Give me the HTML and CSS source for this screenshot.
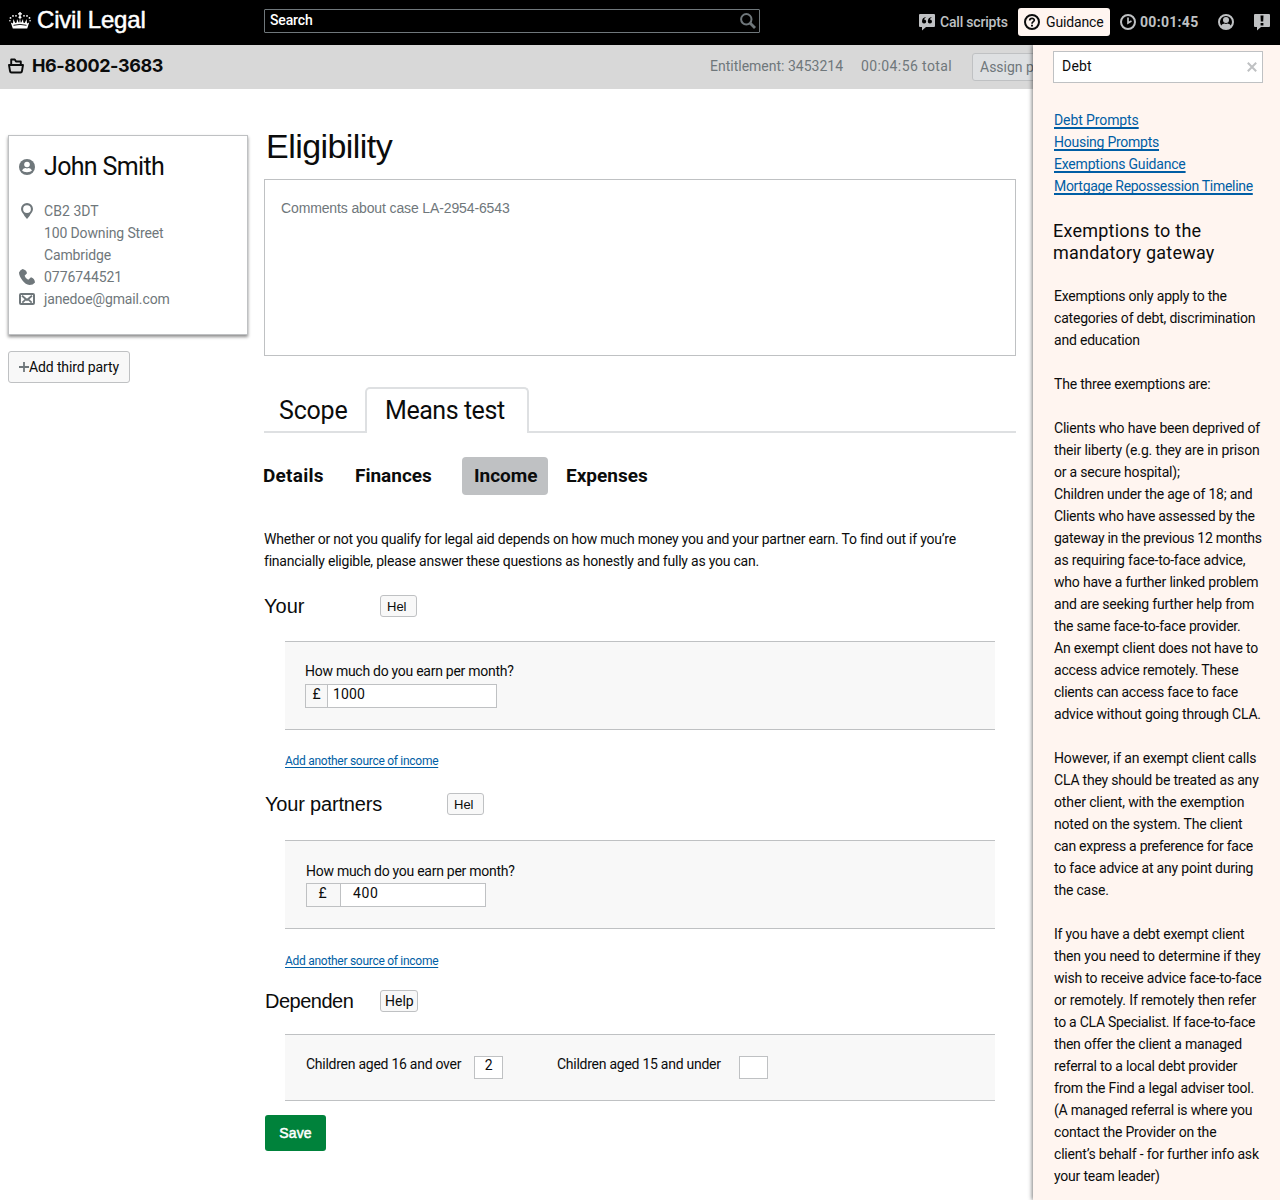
FILE: index.html
```html
<!DOCTYPE html>
<html lang="en">
<head>
<meta charset="utf-8">
<title>Civil Legal</title>
<link rel="stylesheet" href="styles.css">
</head>
<body>
<header class="topbar">
  <svg class="crown" width="22" height="17" viewBox="0 0 22 17" fill="#fff"><path d="M10.300 0h1.400v1.300H13v1.300h-1.300V4h-1.400V2.600H9V1.300h1.300z"/><circle cx="11" cy="5.300" r="1.400"/><circle cx="7" cy="3.800" r=".9"/><circle cx="15" cy="3.800" r=".9"/><circle cx="4" cy="3.900" r=".9"/><circle cx="18" cy="3.900" r=".9"/><circle cx="1.500" cy="5.900" r=".9"/><circle cx="20.500" cy="5.900" r=".9"/><circle cx=".9" cy="8.700" r=".8"/><circle cx="21.100" cy="8.700" r=".8"/><path d="M1.800 10.500l2.200 1 .4-4.500 1.800 4 1.500-.5.300-3.500 1.700 3.500h.6L11 6l.7 4.500h.6L14 7l.3 3.500 1.500.5 1.800-4 .4 4.500 2.200-1-2 6H3.800z"/><path d="M4.500 13.300q6.500-1.800 13 0" fill="none" stroke="#000" stroke-width=".9"/></svg>
  <span class="brand">Civil Legal</span>
  <div class="search"><span>Search</span>
    <svg width="16" height="16" viewBox="0 0 16 16" fill="none" stroke="#6f777b"><circle cx="6.300" cy="6.300" r="5.200" stroke-width="2"/><path d="M10 10l5 5" stroke-width="2.800"/></svg>
  </div>
  <nav class="tools">
    <a class="tool scripts"><svg width="16" height="17" viewBox="0 0 16 17"><path fill="#bfc1c3" d="M1 0h14q1 0 1 1v11q0 1-1 1H7l-4 3.500V13H1q-1 0-1-1V1q0-1 1-1z"/><path fill="#000" d="M7.200 3Q3 3.400 3 7.500a2.100 2.100 0 1 0 2-2.100Q5.400 4.200 7.200 3zM13 3Q8.800 3.400 8.800 7.500a2.100 2.100 0 1 0 2-2.100Q11.200 4.200 13 3z"/></svg><span>Call scripts</span></a>
    <a class="tool guide"><svg width="16" height="16" viewBox="0 0 16 16" fill="none" stroke="#0b0c0c"><circle cx="8" cy="8" r="7" stroke-width="2"/><path d="M5.700 6.500c0-3 4.700-2.800 4.600-.2C10.200 7.800 8 7.600 8 9.700" stroke-width="1.700"/><path d="M8 10.700v1.900" stroke-width="2"/></svg><span>Guidance</span></a>
    <a class="tool timer"><svg width="16" height="16" viewBox="0 0 16 16" fill="none" stroke="#bfc1c3"><circle cx="8" cy="8" r="7" stroke-width="2"/><path d="M8 3.500V9l3.500-2" stroke-width="1.700"/></svg><span>00:01:45</span></a>
    <a class="tool user"><svg width="16" height="16" viewBox="0 0 16 16"><circle cx="8" cy="8" r="7" fill="none" stroke="#bfc1c3" stroke-width="2"/><circle cx="8" cy="6" r="3" fill="#bfc1c3"/><path d="M2.500 12.500Q4 9.700 6.500 9.500q1.500.8 3 0 2.500.2 4 3Q11 15 8 15t-5.500-2.500z" fill="#bfc1c3"/></svg></a>
    <a class="tool alert"><svg width="16" height="17" viewBox="0 0 16 17"><path fill="#bfc1c3" d="M1 0h14q1 0 1 1v11q0 1-1 1H7l-4 3.500V13H1q-1 0-1-1V1q0-1 1-1z"/><path fill="#000" d="M6.500 1.500h3L9.200 7.500H6.800zM6.600 9h2.800v2.600H6.600z"/></svg></a>
  </nav>
</header>
<div class="page">
  <div class="workspace">
    <div class="casebar">
      <svg width="16" height="16" viewBox="0 0 16 16" fill="none" stroke="#0b0c0c" stroke-width="1.900" stroke-linejoin="round"><path d="M1 7h14l-1 6q-.2 1.500-1.500 1.500h-9Q2.200 14.500 2 13zM3.200 7V1.500h3.600l1.200 2h4.800V7"/></svg>
      <h2 class="ref">H6-8002-3683</h2>
      <span class="ent">Entitlement: 3453214</span><span class="total">00:04:56 total</span>
      <button class="assign">Assign provider</button>
    </div>
    <div class="columns">
      <aside class="client">
        <div class="card">
          <div class="name"><svg width="16" height="16" viewBox="0 0 16 16"><circle cx="8" cy="8" r="8" fill="#6f777b"/><circle cx="8" cy="5.500" r="2.800" fill="#fff"/><path d="M3 11.500Q4 9 6.200 9q1.800.9 3.600 0 2.200 0 3.200 2.500-1.500 1.800-5 1.800t-5-1.800z" fill="#fff"/></svg><span>John Smith</span></div>
          <div class="row postcode"><svg width="16" height="16" viewBox="0 0 16 16"><path fill="#6f777b" fill-rule="evenodd" d="M8 0a6 6 0 0 1 6 6c0 2.800-2.500 4.600-3.500 7L8 16l-2.500-3C4.500 10.600 2 8.800 2 6a6 6 0 0 1 6-6zm0 2.200a3.900 3.900 0 1 0 0 7.800 3.900 3.900 0 0 0 0-7.800z"/></svg><span>CB2 3DT</span></div>
          <div class="row"><i></i><span>100 Downing Street</span></div>
          <div class="row"><i></i><span>Cambridge</span></div>
          <div class="row phone"><svg width="16" height="16" viewBox="0 0 16 16"><path fill="#6f777b" d="M3.700 0Q7.500 1 8 4.200L5.600 6.700q.9 2.800 3.600 4.100L12 8.200q3.500 1 4 5.300-2 2.500-5.500 2.500-4-.5-7-4.500Q0 7 0 3.500 1.200.6 3.700 0z"/></svg><span>0776744521</span></div>
          <div class="row"><svg width="16" height="12" viewBox="0 0 16 12" fill="none" stroke="#6f777b"><rect x="1" y="1" width="14" height="10" rx="1" stroke-width="2"/><path d="M3 2.800L8 7l5-4.200M3.300 9.700l3.200-3M12.700 9.700l-3.200-3" stroke-width="1.800"/></svg><span>janedoe@gmail.com</span></div>
        </div>
        <button class="add"><svg width="10" height="10" viewBox="0 0 10 10"><path d="M5 0v10M0 5h10" stroke="#6f777b" stroke-width="1.800"/></svg><span>Add third party</span></button>
      </aside>
      <main class="main">
        <h1>Eligibility</h1>
        <div class="comments">Comments about case LA-2954-6543</div>
        <div class="tabs"><div class="tab scope">Scope</div><div class="tab active">Means test</div><div class="rest"></div></div>
        <nav class="steps"><a class="s1">Details</a><a class="s2">Finances</a><a class="s3">Income</a><a class="s4">Expenses</a></nav>
        <p class="intro">Whether or not you qualify for legal aid depends on how much money you and your partner earn. To find out if you’re<br>financially eligible, please answer these questions as honestly and fully as you can.</p>
        <div class="sect your"><h3>Your</h3><button class="help">Hel</button></div>
        <div class="panel"><label class="q">How much do you earn per month?</label><div class="money"><b>£</b><span>1000</span></div></div>
        <a class="more">Add another source of income</a>
        <div class="sect partner"><h3>Your partners</h3><button class="help">Hel</button></div>
        <div class="panel second"><label class="q">How much do you earn per month?</label><div class="money wide"><b>£</b><span>400</span></div></div>
        <a class="more">Add another source of income</a>
        <div class="sect deps"><h3>Dependen</h3><button class="help full">Help</button></div>
        <div class="panel kids"><label class="k1">Children aged 16 and over</label><div class="num">2</div><label class="k2">Children aged 15 and under</label><div class="num"></div></div>
        <button class="save">Save</button>
      </main>
    </div>
  </div>
  <aside class="guidance">
    <div class="filter"><span>Debt</span><svg width="10" height="10" viewBox="0 0 10 10"><path d="M.8.800l8.400 8.400M9.200.800L.8 9.200" stroke="#bfc1c3" stroke-width="2"/></svg></div>
    <ul class="links"><li class="g1"><a>Debt Prompts</a></li><li class="g2"><a>Housing Prompts</a></li><li class="g3"><a>Exemptions Guidance</a></li><li class="g4"><a>Mortgage Repossession Timeline</a></li></ul>
    <h4>Exemptions to the<br>mandatory gateway</h4>
    <p>Exemptions only apply to the<br>categories of debt, discrimination<br>and education</p>
    <p>The three exemptions are:</p>
    <p>Clients who have been deprived of<br><span class="loose">their liberty (e.g. they are in prison</span><br>or a secure hospital);<br>Children under the age of 18; and<br><span class="tight">Clients who have assessed by the</span><br><span class="tight">gateway in the previous 12 months</span><br>as requiring face-to-face advice,<br>who have a further linked problem<br>and are seeking further help from<br>the same face-to-face provider.<br>An exempt client does not have to<br>access advice remotely. These<br><span class="tight">clients can access face to face</span><br>advice without going through CLA.</p>
    <p><span class="loose">However, if an exempt client calls</span><br>CLA they should be treated as any<br><span class="loose">other client, with the exemption</span><br>noted on the system. The client<br><span class="tight">can express a preference for face</span><br>to face advice at any point during<br>the case.</p>
    <p>If you have a debt exempt client<br><span class="loose">then you need to determine if they</span><br>wish to receive advice face-to-face<br><span class="loose">or remotely. If remotely then refer</span><br><span class="tight">to a CLA Specialist. If face-to-face</span><br>then offer the client a managed<br>referral to a local debt provider<br>from the Find a legal adviser tool.<br>(A managed referral is where you<br>contact the Provider on the<br>client’s behalf - for further info ask<br>your team leader)</p>
  </aside>
</div>
</body>
</html>
```
FILE: styles.css
```css
* { box-sizing: border-box; }
body { margin: 0; width: 1280px; height: 1200px; overflow: hidden; background: #fff; color: #0b0c0c; font: 14px/22px Roboto, sans-serif; }
h1, h2, h3, h4, p, ul { margin: 0; padding: 0; font-weight: 400; }
li { list-style: none; }
svg { display: block; flex: none; }
button { font: inherit; color: inherit; padding: 0; white-space: nowrap; letter-spacing: inherit; }
.topbar { height: 45px; background: #000; display: flex; align-items: flex-start; padding-left: 9px; }
.crown { margin-top: 12px; }
.brand { width: 233px; margin-left: 6px; margin-top: 5px; font: 24px/30px "Liberation Sans", sans-serif; letter-spacing: -.2px; color: #fff; -webkit-text-stroke: .5px #fff; }
.search { width: 496px; height: 24px; margin: 9px 0 0 -6px; border: 1px solid #6f777b; border-radius: 1px; display: flex; justify-content: space-between; padding: 0 3px 0 5px; color: #fff; font-weight: 500; letter-spacing: -.15px; line-height: 21px; }
.search svg { margin-top: 3px; }
.tools { display: flex; align-items: flex-start; margin-left: 159px; padding-top: 8px; color: #bfc1c3; font-weight: 500; }
.tool { display: flex; height: 28px; line-height: 28px; align-items: flex-start; }
.tool svg { margin-top: 6px; }
.scripts span { margin-left: 5px; width: 78px; white-space: nowrap; letter-spacing: -.2px; }
.guide { background: #fff5f0; color: #0b0c0c; border-radius: 3px; width: 92px; padding-left: 6px; font-weight: 400; letter-spacing: -.15px; }
.guide span { margin-left: 6px; }
.timer { margin-left: 10px; width: 98px; font-weight: 700; letter-spacing: .3px; }
.timer span { margin-left: 4px; }
.user { width: 36px; }
.page { display: grid; grid-template-columns: 1033px 247px; height: 1155px; }
.workspace { min-width: 0; overflow: hidden; }
.casebar { height: 44px; background: #d8d8d8; display: flex; padding-left: 8px; color: #6f777b; line-height: 42px; white-space: nowrap; }
.casebar svg { margin-top: 13px; }
.ref { flex: none; width: 686px; padding-left: 8px; font: 700 18px/41px Inter, sans-serif; letter-spacing: -.4px; color: #0b0c0c; }
.ent { flex: none; width: 151px; }
.total { flex: none; width: 111px; letter-spacing: .4px; }
.assign { flex: none; width: 120px; height: 28px; margin-top: 8px; border: 1px solid #bfc1c3; border-radius: 3px; background: #dee0e2; text-align: left; padding-left: 7px; line-height: 26px; }
.columns { display: grid; grid-template-columns: 240px 752px; gap: 16px; padding-left: 8px; }
.client { padding-top: 46px; letter-spacing: -.13px; }
.card { height: 200px; border: 1px solid #bfc1c3; box-shadow: 0 2px 3px rgba(0,0,0,.45); padding: 15px 0 0 10px; }
.name { display: flex; align-items: center; font-size: 25px; line-height: 32px; margin-bottom: 17px; gap: 9px; letter-spacing: -.65px; }
.row { display: flex; align-items: center; gap: 9px; height: 22px; color: #6f777b; }
.row i { width: 16px; }
.postcode { letter-spacing: .05px; }
.phone { letter-spacing: -.05px; }
.add { display: flex; align-items: center; width: 122px; height: 32px; margin-top: 16px; padding-left: 10px; border: 1px solid #bfc1c3; border-radius: 3px; background: #f8f8f8; }
.main { padding-top: 37px; }
h1 { font: 34px/40px "Liberation Sans", sans-serif; height: 53px; padding-left: 2px; letter-spacing: -.55px; }
.comments { height: 177px; border: 1px solid #bfc1c3; padding: 17px 16px; color: #6f777b; font-family: "Liberation Sans", sans-serif; letter-spacing: -.13px; }
.tabs { display: flex; height: 46px; margin-top: 31px; font-size: 25px; line-height: 44px; }
.tab { height: 46px; }
.scope { width: 101px; padding: 1px 0 0 15px; border-bottom: 2px solid #dee0e2; letter-spacing: -.2px; line-height: 46px; }
.active { width: 164px; padding-left: 18px; border: 2px solid #dee0e2; border-bottom: 0; border-radius: 5px 5px 0 0; letter-spacing: -.45px; }
.rest { flex: 1; border-bottom: 2px solid #dee0e2; }
.steps { display: flex; height: 38px; margin-top: 24px; font-size: 19px; font-weight: 700; line-height: 37px; margin-left: -1px; }
.s1 { width: 92px; letter-spacing: .25px; }
.s2 { width: 107px; }
.s3 { width: 86px; background: #bfc1c3; border-radius: 4px; padding-left: 12px; }
.s4 { padding-left: 18px; }
.intro { margin-top: 33px; white-space: nowrap; letter-spacing: -.222px; }
.sect { display: flex; height: 22px; }
.sect h3 { width: 116px; font: 20px/22px "Liberation Sans", sans-serif; white-space: nowrap; }
.your { margin-top: 23px; }
.help { width: 37px; height: 22px; border: 1px solid #bfc1c3; border-radius: 3px; background: #f8f8f8; font: 13px/21px "Liberation Sans", sans-serif; text-align: left; padding-left: 6px; }
.full { width: 38px; padding-left: 4px; font: 14px/20px Roboto, sans-serif; }
.partner { margin-top: 21px; padding-left: 1px; }
.partner h3 { width: 182px; letter-spacing: -.18px; }
.deps { margin-top: 18px; padding-left: 1px; }
.deps h3 { width: 115px; letter-spacing: -.5px; }
.panel { height: 89px; width: 710px; margin: 24px 0 20px 21px; padding: 18px 20px 0; border: 1px solid #bfc1c3; border-width: 1px 0; background: #f8f8f8; }
.q { display: block; line-height: 22px; letter-spacing: -.27px; }
.money { display: flex; width: 192px; height: 24px; margin-top: 2px; border: 1px solid #bfc1c3; line-height: 18px; }
.money b { width: 22px; font-weight: 400; text-align: center; border-right: 1px solid #bfc1c3; }
.money span { flex: 1; background: #fff; padding-left: 5px; letter-spacing: .15px; }
.second { margin: 25px 0 21px 21px; padding-top: 19px; padding-left: 21px; }
.money.wide { width: 180px; margin-top: 1px; }
.wide b { width: 34px; padding-right: 2px; }
.money.wide span { padding-left: 12px; letter-spacing: .6px; }
.more { display: block; width: 154px; margin-left: 21px; font-size: 12px; line-height: 22px; color: #005ea5; text-decoration: underline; text-decoration-skip-ink: none; white-space: nowrap; text-underline-offset: 2px; letter-spacing: -.28px; }
.panel.kids { display: flex; height: 67px; margin: 22px 0 14px 21px; padding: 18px 0 0 21px; white-space: nowrap; letter-spacing: -.26px; }
.k1 { width: 168px; }
.num { width: 29px; height: 23px; margin-top: 3px; border: 1px solid #bfc1c3; background: #fff; text-align: center; line-height: 17px; }
.k2 { width: 182px; margin-left: 54px; }
.save { width: 61px; height: 36px; margin-left: 1px; border: 0; border-radius: 3px; background: #00823b; color: #fff; font: 14px/36px "Liberation Sans", sans-serif; letter-spacing: .2px; -webkit-text-stroke: .5px #fff; }
.guidance { background: #fff5f0; box-shadow: -1px 0 4px rgba(0,0,0,.5); clip-path: inset(0 0 0 -6px); padding: 6px 0 0 20px; white-space: nowrap; position: relative; letter-spacing: -.2px; }
.filter { width: 210px; height: 32px; border: 1px solid #bfc1c3; background: #fff; display: flex; justify-content: space-between; align-items: center; padding: 0 5px 2px 8px; letter-spacing: .2px; }
.filter svg { position: relative; top: 1px; }
.links { margin: 26px 0 23px 1px; color: #005ea5; }
.links a { text-decoration: underline; text-decoration-thickness: 1.5px; text-decoration-skip-ink: none; text-underline-offset: 2px; }
.g1 { letter-spacing: -.1px; }
.g2 { letter-spacing: -.25px; }
.g4 { letter-spacing: -.31px; }
h4 { font-size: 18px; line-height: 22px; margin-bottom: 21px; letter-spacing: .23px; }
.guidance p { padding-left: 1px; margin-bottom: 22px; }
.guidance p:last-child { margin-bottom: 0; }
.tight { letter-spacing: -.27px; }
.loose { letter-spacing: -.13px; }
```
